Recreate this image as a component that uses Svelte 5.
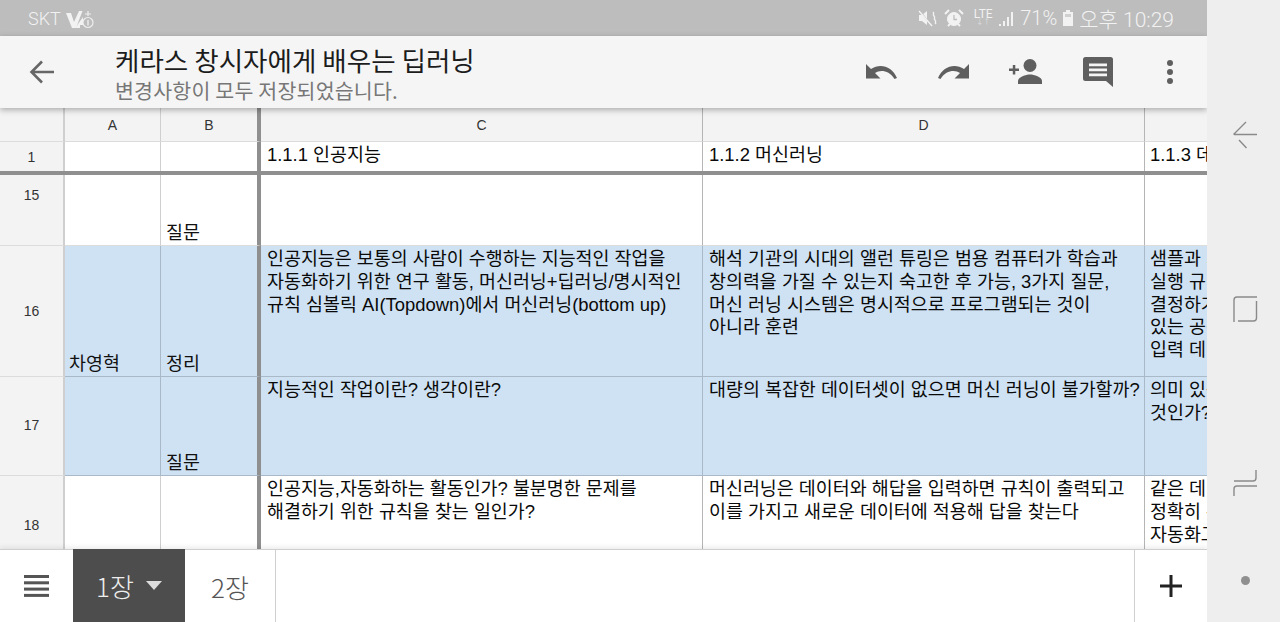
<script>
  const rows = [
    { n: '15', cls: 'h15', a: '', b: '질문', c: '', d: '', e: '', blue: false },
    { n: '16', cls: 'h16', a: '차영혁', b: '정리',
      c: '인공지능은 보통의 사람이 수행하는 지능적인 작업을\n자동화하기 위한 연구 활동, 머신러닝+딥러닝/명시적인\n규칙 심볼릭 AI(Topdown)에서 머신러닝(bottom up)',
      d: '해석 기관의 시대의 앨런 튜링은 범용 컴퓨터가 학습과\n창의력을 가질 수 있는지 숙고한 후 가능, 3가지 질문,\n머신 러닝 시스템은 명시적으로 프로그램되는 것이\n아니라 훈련',
      e: '샘플과 기대\n실행 규칙을\n결정하기 위\n있는 공간에\n입력 데이터', blue: true },
    { n: '17', cls: 'h17', a: '', b: '질문',
      c: '지능적인 작업이란? 생각이란?',
      d: '대량의 복잡한 데이터셋이 없으면 머신 러닝이 불가할까?',
      e: '의미 있는\n것인가?', blue: true },
    { n: '18', cls: 'h18', a: '', b: '',
      c: '인공지능,자동화하는 활동인가? 불분명한 문제를\n해결하기 위한 규칙을 찾는 일인가?',
      d: '머신러닝은 데이터와 해답을 입력하면 규칙이 출력되고\n이를 가지고 새로운 데이터에 적용해 답을 찾는다',
      e: '같은 데이터\n정확히 수행\n자동화고', blue: false }
  ];
</script>

<div class="screen">
  <div class="main">
    <div class="status">
      <div class="status-left">
        <span>SKT</span>
        <svg width="30" height="22" viewBox="0 0 30 22">
          <path d="M0 6h5l3 9 5-11h3.500L10 21H6z" fill="#f2f2f2"/>
          <path d="M12 17l5-7v8h-3v3h-5z" fill="#f2f2f2"/>
          <circle cx="22" cy="15.500" r="5" fill="none" stroke="#eee" stroke-width="1.200"/>
          <path d="M22 13v5.500" stroke="#eee" stroke-width="1.400"/>
          <path d="M19 7h6M22 4v5" stroke="#eee" stroke-width="1.200"/>
        </svg>
      </div>
      <div class="status-right">
        <svg width="21" height="18" viewBox="0 0 21 18" fill="#f2f2f2">
          <path d="M1 6h3l5-4v14l-5-4H1z"/>
          <path d="M1 1l12 15" stroke="#bdbdbd" stroke-width="1.500"/>
          <path d="M1 2l13 15" stroke="#f2f2f2" stroke-width="1.400"/>
          <path d="M15 3c2 2-1 2 1 4s-1 2 1 4-1 2 1 4" fill="none" stroke="#f2f2f2" stroke-width="1.400"/>
        </svg>
        <svg width="20" height="20" viewBox="0 0 20 20">
          <circle cx="10" cy="11" r="6.500" fill="#f2f2f2" stroke="#f2f2f2"/>
          <path d="M10 7v4.500h3" fill="none" stroke="#bdbdbd" stroke-width="1.300"/>
          <path d="M1 6l4-4M19 6l-4-4M4 18l2-2M16 18l-2-2" stroke="#f2f2f2" stroke-width="2"/>
        </svg>
        <span class="lte">LTE<i>↓↑</i></span>
        <svg width="18" height="17" viewBox="0 0 18 17" fill="#f2f2f2">
          <rect x="1" y="14" width="2" height="2"/>
          <rect x="5" y="11" width="2" height="5"/>
          <rect x="9" y="7" width="2" height="9"/>
          <rect x="13" y="2" width="2" height="14"/>
        </svg>
        <span class="pct">71%</span>
        <svg width="12" height="18" viewBox="0 0 12 18">
          <path d="M4 1h4v2h3v14H1V3h3z" fill="#f2f2f2"/>
          <rect x="3" y="5" width="6" height="3" fill="#d0d0d0"/>
        </svg>
        <span class="clock">오후 10:29</span>
      </div>
    </div>

    <header class="toolbar">
      <button class="back" aria-label="뒤로">
        <svg width="26" height="26" viewBox="0 0 26 26" fill="none" stroke="#666" stroke-width="2.600">
          <path d="M25 13H3M13 2.500 2.500 13 13 23.500"/>
        </svg>
      </button>
      <div class="titles">
        <div class="title">케라스 창시자에게 배우는 딥러닝</div>
        <div class="subtitle">변경사항이 모두 저장되었습니다.</div>
      </div>
      <div class="actions">
        <svg class="ic-undo" width="31" height="15" viewBox="0 0 31 15" fill="#5f5f5f">
          <path d="M0 0v14.500h14.500L9 9c5-3.500 14-3 19.500 6l2.500-1C26 2 14-1 5 5z"/>
        </svg>
        <svg class="ic-redo" width="31" height="15" viewBox="0 0 31 15" fill="#5f5f5f">
          <path d="M31 0v14.500H16.500L22 9c-5-3.500-14-3-19.500 6L0 14C5 2 17-1 26 5z"/>
        </svg>
        <svg class="ic-person" width="34" height="25" viewBox="0 0 34 25" fill="#5f5f5f">
          <circle cx="21" cy="6.500" r="6.500"/>
          <path d="M9 25v-3c0-4 8-6.500 12-6.500s12 2.500 12 6.500v3z"/>
          <path d="M0 9.500h10V12H0zM3.800 6h2.500v9.500H3.800z"/>
        </svg>
        <svg class="ic-comment" width="30" height="30" viewBox="0 0 30 30">
          <path d="M2.500 0h25A2.500 2.500 0 0 1 30 2.500V30l-7-6H2.500A2.500 2.500 0 0 1 0 21.500v-19A2.500 2.500 0 0 1 2.500 0z" fill="#5f5f5f"/>
          <path d="M6 6.500h18v2.800H6zM6 11.500h18v2.800H6zM6 16.500h18v2.800H6z" fill="#f5f5f5"/>
        </svg>
        <svg class="ic-more" width="8" height="26" viewBox="0 0 8 26" fill="#5f5f5f">
          <circle cx="4" cy="4" r="3"/><circle cx="4" cy="13" r="3"/><circle cx="4" cy="22" r="3"/>
        </svg>
      </div>
    </header>

    <div class="sheet">
      <div class="line colhead">
        <div class="c0 hd"></div>
        <div class="ca hd">A</div>
        <div class="cb hd freeze">B</div>
        <div class="cc hd">C</div>
        <div class="cd hd">D</div>
        <div class="ce hd"></div>
      </div>
      <div class="line r1">
        <div class="c0 hd">1</div>
        <div class="ca"></div>
        <div class="cb freeze"></div>
        <div class="cc txt">1.1.1 인공지능</div>
        <div class="cd txt">1.1.2 머신러닝</div>
        <div class="ce txt">1.1.3 데이터</div>
      </div>
      {#each rows as r}
        <div class="line {r.cls}" class:blue={r.blue}>
          <div class="c0 hd" class:low={r.n === '18'}>{r.n}</div>
          <div class="ca bottom">{r.a}</div>
          <div class="cb bottom freeze">{r.b}</div>
          <div class="cc txt">{r.c}</div>
          <div class="cd txt">{r.d}</div>
          <div class="ce txt">{r.e}</div>
        </div>
      {/each}
    </div>

    <footer class="tabs">
      <button class="menu" aria-label="메뉴">
        <svg width="26" height="22" viewBox="0 0 26 22" fill="#555">
          <rect y="0" width="25" height="3"/><rect y="6.300" width="25" height="3"/><rect y="12.600" width="25" height="3"/><rect y="18.900" width="25" height="3"/>
        </svg>
      </button>
      <div class="tab active">1장<span class="caret"></span></div>
      <div class="tab second">2장</div>
      <div class="spacer"></div>
      <button class="add" aria-label="추가">
        <svg width="24" height="24" viewBox="0 0 24 24" fill="#222">
          <rect x="1" y="10.500" width="22" height="3"/><rect x="10.500" y="1" width="3" height="22"/>
        </svg>
      </button>
    </footer>
  </div>

  <nav class="softkeys">
    <svg width="26" height="28" viewBox="0 0 26 28" fill="none" stroke="#8a8a8a" stroke-width="1.400">
      <path d="M25 13.500H2M14 1 1.500 13.500M7 19l7.500 8"/>
    </svg>
    <svg width="26" height="28" viewBox="0 0 26 28" fill="none" stroke="#8a8a8a" stroke-width="1.400">
      <path d="M25 2H5Q2 2 2 5v22M24.500 6v17q0 3-3 3H6"/>
    </svg>
    <svg width="26" height="28" viewBox="0 0 26 28" fill="none" stroke="#8a8a8a" stroke-width="1.400">
      <path d="M24 1v8q0 3-3 3H2M2 27v-7q0-3 3-3h20"/>
    </svg>
    <span class="dot"></span>
  </nav>
</div>

<style>
  :global(body) { margin: 0; background: #fff; }
  .screen {
    display: flex; width: 1280px; height: 622px; overflow: hidden;
    font-family: "Liberation Sans", "Noto Sans CJK KR", sans-serif; color: #111;
  }
  .main { width: 1207px; height: 622px; display: flex; flex-direction: column; position: relative; }
  .softkeys {
    width: 73px; background: #eeeeee; display: flex; flex-direction: column; align-items: center;
    padding: 121px 0 0 3px; box-sizing: border-box; position: relative; z-index: 3;
  }
  .softkeys svg { flex: none; }
  .softkeys svg + svg { margin-top: 146px; }
  .dot { width: 9px; height: 9px; border-radius: 50%; background: #8f8f8f; margin-top: 79px; }

  .status {
    height: 36px; flex: none; background: #bdbdbd; color: #f2f2f2;
    display: flex; justify-content: space-between; align-items: center; padding: 0 33px 0 28px;
    font-family: Roboto, "Noto Sans CJK KR", sans-serif;
  }
  .status-left { display: flex; align-items: center; gap: 5px; font-size: 18px; font-weight: 300; }
  .status-right { display: flex; align-items: center; gap: 5px; font-size: 21px; font-weight: 300; }
  .lte { font-size: 12px; line-height: 10px; width: 20px; text-align: center; margin: -2px 0 0 4px; font-weight: 400; }
  .lte i { display: block; font-size: 7px; line-height: 7px; font-style: normal; color: #ddd; }
  .pct { margin-left: -1px; font-weight: 300; font-size: 20px; }
  .clock { font-size: 21px; }

  .toolbar {
    height: 72px; flex: none; background: #f5f5f5; display: flex; align-items: center;
    position: relative; z-index: 2; box-shadow: 0 2px 6px rgba(0, 0, 0, .3);
  }
  button { border: 0; background: none; padding: 0; display: flex; }
  .back { margin-left: 29px; }
  .titles { margin-left: 60px; padding-top: 4px; font-family: "Noto Sans CJK KR", sans-serif; }
  .title { font-size: 26.55px; line-height: 34px; color: #1c1c1c; margin-top: -4px; }
  .subtitle { font-size: 20.55px; line-height: 24px; color: #777; letter-spacing: .2px; margin-top: 1px; }
  .actions { margin-left: auto; display: flex; align-items: center; position: relative; }
  .ic-undo { margin-right: 41px; margin-top: -1px; }
  .ic-redo { margin-right: 40px; margin-top: -1px; }
  .ic-person { margin-right: 40px; margin-top: -1px; }
  .ic-comment { margin-right: 53px; margin-top: -1px; }
  .ic-more { margin-right: 33px; }

  .sheet { flex: 1; min-height: 0; overflow: hidden; position: relative; }
  .line {
    display: grid; grid-template-columns: 65px 96px 100px 442px 442px 62px;
    box-sizing: border-box; font-size: 18.43px;
  }
  .line > div { box-sizing: border-box; border-right: 1px solid #cfcfcf; border-bottom: 1px solid #dcdcdc; overflow: hidden; }
  .hd { background: #f3f3f3; color: #333; font-size: 14px; display: flex; align-items: center; justify-content: center; }
  .line > .c0 { border-right: 2px solid #cfcfcf; }
  .line > .freeze { border-right: 4px solid #8f8f8f; }
  .line > .cc, .line > .cd { border-right-color: #b5b5b5; }
  .line > .ce { border-right: 0; }
  .line > .txt { padding: 2px 5px 0 6px; line-height: 22.8px; color: #0a0a0a; white-space: pre; }
  .line > .ce.txt { padding-left: 5px; }
  .bottom { display: flex; align-items: flex-end; padding: 0 5px 0 5px; line-height: 24px; }
  .line > .ca.bottom { padding-left: 4px; }
  .colhead { height: 34px; }
  .colhead > .hd { padding-top: 1px; }
  .r1 { height: 33px; border-bottom: 4px solid #8f8f8f; }
  .r1 > div { border-bottom: 0 !important; }
  .h15 { height: 71px; }
  .h16 { height: 131px; }
  .h17 { height: 99px; }
  .h18 { height: 80px; }
  .blue > div:not(.c0) { background: #cfe2f3; border-right-color: #a9b9c7; border-bottom-color: #a9b9c7; }
  .blue > .freeze { border-right-color: #8f8f8f !important; }
  .h15 > .c0 { align-items: flex-start; padding-top: 12px; }
  .h17 > .c0 { padding-bottom: 3px; }
  .low { align-items: flex-end !important; padding-bottom: 22px; }

  .tabs {
    position: absolute; left: 0; right: 0; bottom: 0; height: 73px; background: #fff; display: flex;
    border-top: 1px solid #cfcfcf; box-sizing: border-box; box-shadow: 0 -2px 5px rgba(0, 0, 0, .08);
  }
  .menu { width: 73px; align-items: center; justify-content: center; flex: none; }
  .tab {
    display: flex; align-items: center; justify-content: center; color: #555;
    font-size: 26px; font-family: "Noto Sans CJK KR", sans-serif; font-weight: 300;
  }
  .tab.second { width: 90px; }
  .tab.active { width: 112px; background: #4d4d4d; color: #eee; margin-top: -1px; }
  .caret { width: 0; height: 0; border: 8px solid transparent; border-top: 9px solid #ddd; border-bottom: 0; margin-left: 12px; }
  .spacer { flex: 1; border-left: 1px solid #cfcfcf; }
  .add { width: 73px; flex: none; align-items: center; justify-content: center; border-left: 1px solid #cfcfcf; }
</style>
